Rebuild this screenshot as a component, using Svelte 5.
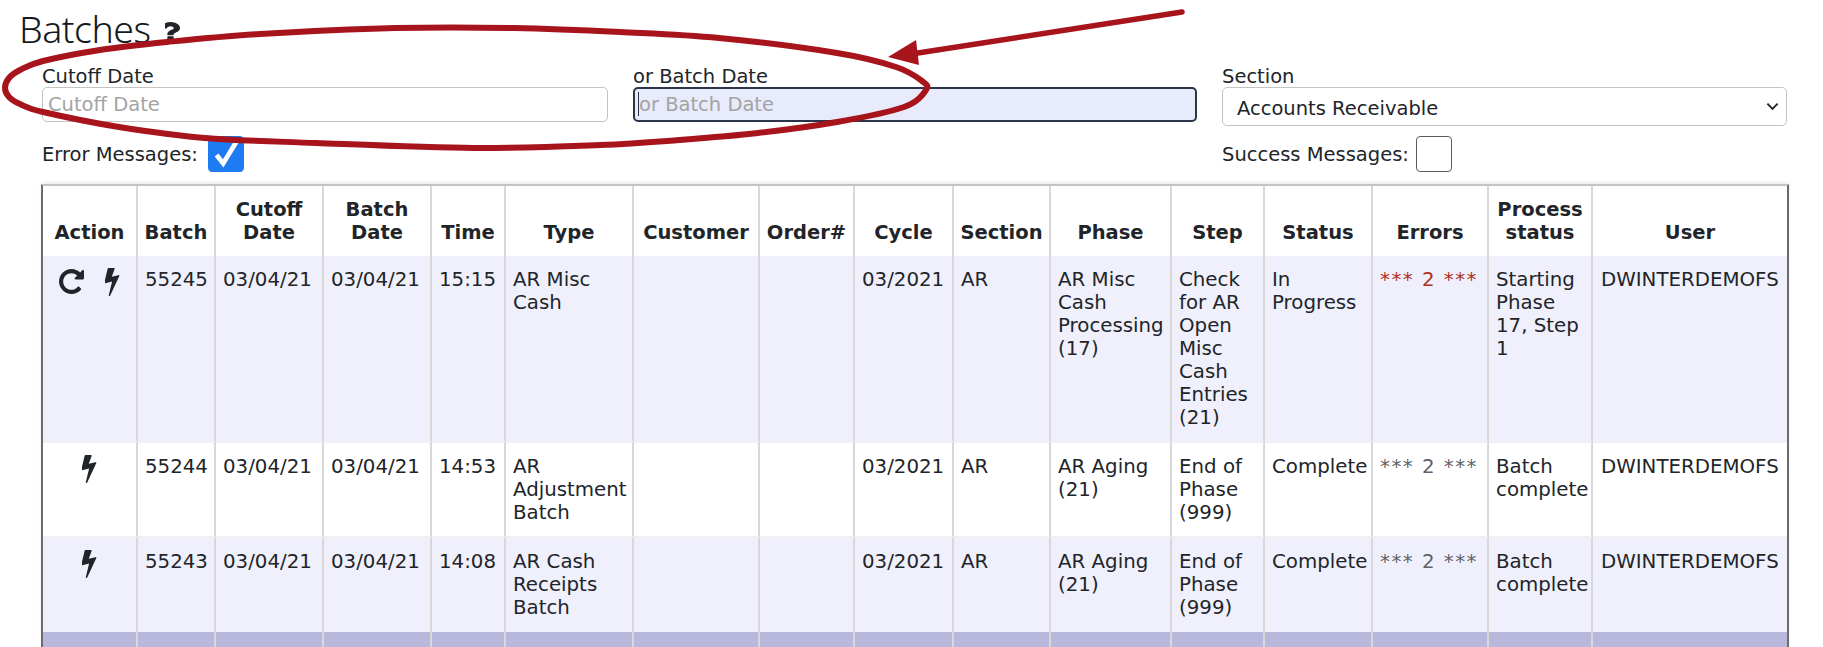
<script>
  const widths = [95,78,108,108,74,128,126,95,99,97,121,93,108,116,104,194];
  const headers = ['Action','Batch','Cutoff Date','Batch Date','Time','Type','Customer','Order#','Cycle','Section','Phase','Step','Status','Errors','Process status','User'];
  const rows = [
    { icons:['redo','bolt'], batch:'55245', time:'15:15', type:'AR Misc Cash', phase:'AR Misc Cash Processing (17)', step:'Check for AR Open Misc Cash Entries (21)', status:'In Progress', red:true, proc:'Starting Phase 17, Step 1' },
    { icons:['bolt'], batch:'55244', time:'14:53', type:'AR Adjustment Batch', phase:'AR Aging (21)', step:'End of Phase (999)', status:'Complete', red:false, proc:'Batch complete' },
    { icons:['bolt'], batch:'55243', time:'14:08', type:'AR Cash Receipts Batch', phase:'AR Aging (21)', step:'End of Phase (999)', status:'Complete', red:false, proc:'Batch complete' }
  ];
  const bolt = "M1333 566q18 20 7 44l-540 1157q-13 25-42 25-4 0-14-2-17-5-25.5-19t-4.5-30l197-808-406 101q-4 1-12 1-18 0-31-11-18-15-13-39l201-825q4-14 16-23t28-9h328q19 0 32 12.5t13 29.5q0 8-5 18l-171 463 396-98q8-2 12-2 19 0 34 15z";
  const redo = "M1664 256v448q0 26-19 45t-45 19h-448q-42 0-59-40-17-39 14-69l138-138q-148-137-349-137-104 0-198.5 40.5t-163.5 109.5-109.5 163.5-40.5 198.5 40.5 198.5 109.5 163.5 163.5 109.5 198.5 40.5q119 0 225-52t179-147q7-10 23-12 15 0 25 9l137 138q9 8 9.5 20.5t-7.5 22.5q-109 132-264 204.5t-327 72.5q-156 0-298-61t-245-164-164-245-61-298 61-298 164-245 245-164 298-61q147 0 284.5 55.5t244.5 156.5l130-129q29-31 70-14 39 17 39 59z";

  // hand-drawn ring, traced point by point; closed Catmull-Rom through the points
  const ring = [[5,88],[9,78],[20,70],[43,61],[100,50],[167,42],[260,34],[395,28],[514,28],[620,32],[719,38],[837,53],[896,67],[922,81],[926,90],[904,107],[837,122],[758,133],[679,140],[600,145],[474,148],[316,143],[205,138],[119,127],[43,112],[20,104],[9,97]];
  function smooth(p) {
    const n = p.length;
    let d = `M${p[0][0]} ${p[0][1]}`;
    for (let i = 0; i < n; i++) {
      const a = p[(i - 1 + n) % n], b = p[i], c = p[(i + 1) % n], e = p[(i + 2) % n];
      const c1 = [b[0] + (c[0] - a[0]) / 6, b[1] + (c[1] - a[1]) / 6];
      const c2 = [c[0] - (e[0] - b[0]) / 6, c[1] - (e[1] - b[1]) / 6];
      d += `C${c1[0].toFixed(1)} ${c1[1].toFixed(1)} ${c2[0].toFixed(1)} ${c2[1].toFixed(1)} ${c[0]} ${c[1]}`;
    }
    return d + 'Z';
  }
  const ringPath = smooth(ring);
</script>

<div class="page">
  <h1>Batches <svg class="help" viewBox="268 256 752 1280" preserveAspectRatio="none" aria-label="help"><path d="M704 1256v240q0 16-12 28t-28 12h-240q-16 0-28-12t-12-28v-240q0-16 12-28t28-12h240q16 0 28 12t12 28zm316-600q0 54-15.5 101t-35 76.5-55 59.5-57.5 43.5-61 35.5q-41 23-68.5 65t-27.5 67q0 17-12 32.5t-28 15.5h-240q-15 0-25.5-18.5t-10.5-37.5v-45q0-83 65-156.5t143-108.5q59-27 84-56t25-76q0-42-46.5-74t-107.5-32q-65 0-108 29-35 25-107 115-13 16-31 16-12 0-25-8l-164-125q-13-10-15.5-25t5.5-28q160-266 464-266 80 0 161 31t146 83 106 127.5 41 158.5z"/></svg></h1>

  <div class="filters">
    <label class="field">
      <span>Cutoff Date</span>
      <input type="text" placeholder="Cutoff Date" />
    </label>
    <label class="field">
      <span>or Batch Date</span>
      <span class="focuswrap">
        <input class="focused" type="text" placeholder="or Batch Date" />
        <i class="caret"></i>
      </span>
    </label>
    <label class="field">
      <span>Section</span>
      <span class="selectwrap">
        <select><option>Accounts Receivable</option></select>
        <svg class="chev" viewBox="0 0 14 9"><path d="M1.5 1.5 7 7l5.500-5.500" fill="none" stroke="#212529" stroke-width="2"/></svg>
      </span>
    </label>
  </div>

  <div class="checks">
    <label class="check">
      <span>Error Messages:</span>
      <span class="box on"><svg viewBox="0 0 36 36"><path d="M8 19l7 9L29 5" fill="none" stroke="#fff" stroke-width="5"/></svg></span>
    </label>
    <span></span>
    <label class="check">
      <span>Success Messages:</span>
      <span class="box"></span>
    </label>
  </div>

  <div class="tablewrap">
    <table>
      <colgroup>
        {#each widths as w}<col style="width:{w}px" />{/each}
      </colgroup>
      <thead>
        <tr>{#each headers as h}<th>{h}</th>{/each}</tr>
      </thead>
      <tbody>
        {#each rows as r, i}
          <tr class:alt={i % 2 === 0}>
            <td class="act">
              {#each r.icons as ic}
                {#if ic === 'redo'}
                  <svg class="redo" viewBox="128 128 1536 1536"><path d={redo}/></svg>
                {:else}
                  <svg class="bolt" viewBox="520 128 830 1664"><path d={bolt}/></svg>
                {/if}
              {/each}
            </td>
            <td>{r.batch}</td>
            <td>03/04/21</td>
            <td>03/04/21</td>
            <td>{r.time}</td>
            <td>{r.type}</td>
            <td></td>
            <td></td>
            <td>03/2021</td>
            <td>AR</td>
            <td>{r.phase}</td>
            <td>{r.step}</td>
            <td>{r.status}</td>
            <td class="err" class:red={r.red}>*** 2 ***</td>
            <td>{r.proc}</td>
            <td class="user">DWINTERDEMOFS</td>
          </tr>
        {/each}
        <tr class="sel">{#each widths as w}<td>&nbsp;</td>{/each}</tr>
      </tbody>
    </table>
  </div>

  <svg class="markup" viewBox="0 0 1823 647" aria-hidden="true">
    <path d={ringPath} fill="none" stroke="#a8141c" stroke-width="6"/>
    <path d="M1182 12 905 55" fill="none" stroke="#a8141c" stroke-width="5.500" stroke-linecap="round"/>
    <path d="M888 57 916 40 919 65Z" fill="#a8141c"/>
  </svg>
</div>

<style>
  :global(body) { margin: 0; background: #fff; overflow: hidden; }
  .page {
    position: relative;
    width: 1823px;
    height: 647px;
    overflow: hidden;
    box-sizing: border-box;
    padding: 0 36px 0 42px;
    font-family: "DejaVu Sans", sans-serif;
    font-size: 19.800px;
    color: #212529;
  }
  h1 {
    margin: 0 0 0 -23px;
    height: 57px;
    box-sizing: border-box;
    color: #16191c;
    font-family: "Noto Sans", sans-serif;
    font-weight: 300;
    font-size: 37.500px;
    letter-spacing: -0.500px;
    line-height: 44px;
    display: flex;
    align-items: center;
    gap: 14px;
  }
  .help { width: 15px; height: 19px; fill: #212529; margin-top: 6px; }
  .filters {
    display: grid;
    grid-template-columns: 566px 564px 565px;
    column-gap: 25px;
    height: 67px;
    margin-top: 8px;
  }
  .field { display: flex; flex-direction: column; font-size: 19.500px; }
  .field > span:first-child { height: 22px; line-height: 24px; }
  input, select {
    display: block;
    width: 100%;
    box-sizing: border-box;
    border: 1px solid #c4c4c4;
    border-radius: 5px;
    background: #fff;
    font: inherit;
    color: #212529;
    outline: none;
    margin: 0;
  }
  input { height: 35px; padding: 0 5px; }
  input::placeholder { color: #a3a3a3; opacity: 1; }
  input.focused { background: #e8ebfb; border: 2px solid #2b3448; padding: 0 4px; }
  .focuswrap { position: relative; display: block; }
  .caret { position: absolute; left: 5px; top: 5px; width: 1px; height: 24px; background: #2b3448; }
  .selectwrap { position: relative; display: block; }
  select { height: 39px; padding: 3px 14px 0; appearance: none; font-size: 19.500px; }
  .chev { position: absolute; right: 8px; top: 15px; width: 13px; height: 9px; }
  .checks {
    display: grid;
    grid-template-columns: 566px 564px 565px;
    column-gap: 25px;
    margin-top: 4px;
  }
  .check { display: flex; align-items: center; gap: 7px; height: 36px; font-size: 19.500px; }
  .box { width: 36px; height: 36px; box-sizing: border-box; border: 1px solid #5c5c5c; border-radius: 4px; background: #fff; display: block; }
  .box.on { background: #1f7bf2; border-color: #1f7bf2; margin-left: 3px; }
  .box svg { display: block; width: 100%; height: 100%; }
  .tablewrap {
    margin: 12px 0 0 -1px;
    width: 1748px;
    border-top: 2px solid #c4c4c8;
    border-left: 2px solid #6c6c70;
    border-right: 2px solid #6c6c70;
    box-shadow: 0 -2px 3px #eee;
    box-sizing: border-box;
  }
  table {
    table-layout: fixed;
    border-collapse: separate;
    border-spacing: 0;
    width: 1744px;
  }
  th, td {
    padding: 12px 6px 12px 7px;
    border-right: 2px solid #d8d8d8;
    vertical-align: top;
    text-align: left;
    overflow: hidden;
  }
  th:last-child, td:last-child { border-right: none; }
  th {
    font-weight: 700;
    text-align: center;
    vertical-align: bottom;
    font-size: 19.500px;
    padding: 12px 3px;
    line-height: 23px;
  }
  td { border-top: 2px solid #f0f0f4; line-height: 23px; }
  tbody tr:first-child td { border-top: none; }
  tbody tr:nth-child(3) td { padding-bottom: 13px; }
  tr.alt td { background: #f0f0fc; }
  td.act { text-align: center; padding: 12px 4px; white-space: nowrap; }
  td.user { padding-left: 8px; }
  .bolt { width: 15px; height: 28px; fill: #212529; }
  .redo { width: 25px; height: 25px; fill: #212529; margin-right: 21px; vertical-align: 2px; }
  td.err { color: #5f6368; white-space: nowrap; letter-spacing: 1.500px; }
  td.err.red { color: #b03020; }
  tr.sel td { background: #b8b8dc; border-top: none; }
  .markup { position: absolute; left: 0; top: 0; width: 1823px; height: 647px; pointer-events: none; }
</style>
